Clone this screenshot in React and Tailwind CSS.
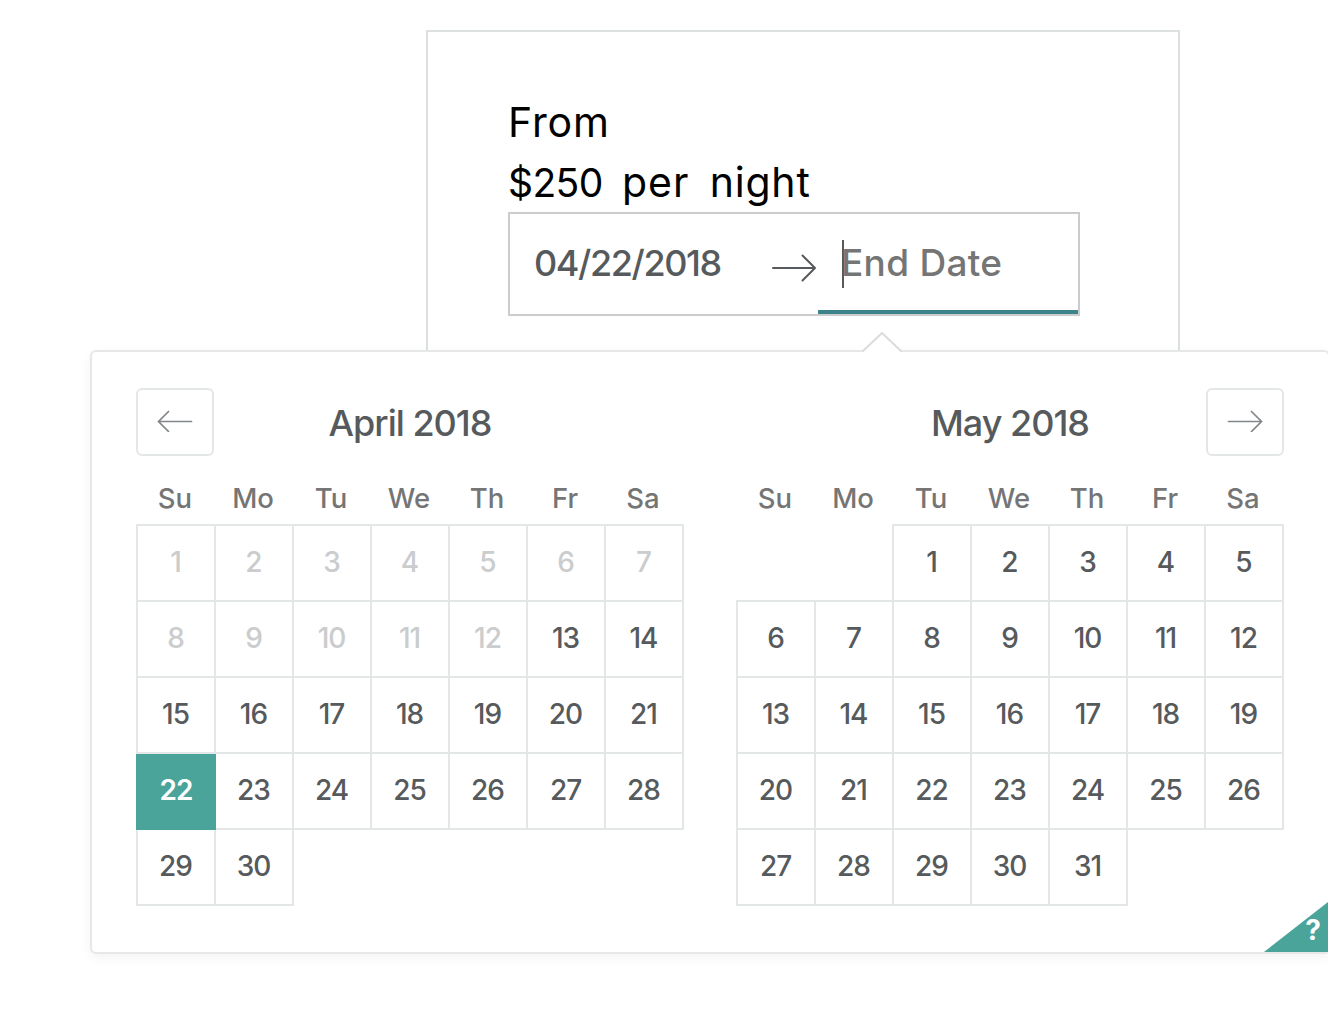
import React from 'react';

const WEEKDAYS = ['Su', 'Mo', 'Tu', 'We', 'Th', 'Fr', 'Sa'];

function LongArrow({ className }) {
  return (
    <svg viewBox="0 0 44 28" className={className} fill="none" stroke="currentColor" strokeLinecap="round" strokeLinejoin="round">
      <path d="M1 14h42M30.500 1.500L43 14 30.500 26.500" />
    </svg>
  );
}

function NavArrow({ left = false }) {
  return (
    <svg viewBox="0 0 36 22" className="h-[22px] w-9 text-[#82888a]" fill="none" stroke="currentColor" strokeWidth="1.7" strokeLinecap="round">
      {left ? <path d="M34.500 11.500H1.500M11.500 1.500L1.500 11.500l10 10" /> : <path d="M1.500 11.500H34.500M24.500 1.500L34.500 11.500 24.500 21.500" />}
    </svg>
  );
}

function NavButton({ left = false }) {
  return (
    <button className="flex h-[68px] w-[78px] items-center justify-center rounded-[6px] border-2 border-[#e4e7e7] pb-0.5">
      <NavArrow left={left} />
    </button>
  );
}

function Day({ n, disabled, selected }) {
  if (selected) {
    return (
      <div className="z-10 mt-0.5 flex h-[76px] w-20 items-center justify-center bg-[#4ba499] pb-1 text-white font-semibold">
        {n}
      </div>
    );
  }
  return (
    <div className={'flex h-[78px] w-20 items-center justify-center border-2 border-[#e4e7e7] pr-px pb-0.5 ' + (disabled ? 'text-[#cacccd]' : 'text-[#565a5c]')}>
      {n}
    </div>
  );
}

function Month({ offset, count, disabledUntil = 0, selected }) {
  const blanks = Array.from({ length: offset });
  const days = Array.from({ length: count }, (_, i) => i + 1);
  return (
    <div className="w-[548px] text-[28px]">
      <div className="grid h-[52px] grid-cols-[repeat(7,78px)] items-center pt-0.5 text-center text-[#757575]">
        {WEEKDAYS.map((d) => (
          <span key={d} className="text-[27.500px] font-[450]">{d}</span>
        ))}
      </div>
      <div className="grid auto-rows-[76px] grid-cols-[repeat(7,78px)] font-medium tracking-[-1px]">
        {blanks.map((_, i) => (
          <span key={'b' + i} />
        ))}
        {days.map((n) => (
          <Day key={n} n={n} disabled={n <= disabledUntil} selected={n === selected} />
        ))}
      </div>
    </div>
  );
}

export default function App() {
  return (
    <div className="h-[1034px] w-[1328px] overflow-hidden bg-white pt-[30px] font-['Inter',sans-serif]">
      <div className="ml-[426px] h-80 w-[754px] border-2 border-b-0 border-[#dce0e0] px-20 pt-[60px]">
        <div className="h-[60px] text-[41px] leading-[60px] tracking-[0.900px] text-black">From</div>
        <div className="h-[60px] whitespace-nowrap text-[41px] leading-[60px] text-black [word-spacing:8px]">
          <span className="text-[39px] tracking-[-0.600px]">$250 </span>
          <span className="ml-px tracking-[0.900px]">per </span>
          <span className="tracking-[0.800px]">night</span>
        </div>
        <div className="flex h-[104px] w-[572px] border-2 border-[#cacccd] text-[36px]">
          <div className="flex w-[260px] items-center pl-6 pb-[3px] font-[450] text-[#565a5c] tracking-[-1.400px]">
            <span>04/22/2018</span>
          </div>
          <div className="flex w-12 items-center pt-2 pl-0.5">
            <LongArrow className="h-7 w-11 stroke-2 text-[#565a5c]" />
          </div>
          <div className="flex w-[260px] items-center border-b-4 border-[#3c8489] pt-[3px] pl-6 text-[#757575]">
            <span className="h-12 w-0.5 bg-[#565a5c]" />
            <span className="-ml-[3px] pb-0.5 text-[37px] font-[450] tracking-[0.300px]">End Date</span>
          </div>
        </div>
      </div>

      <div className="relative ml-[90px] h-[604px] w-[1240px] rounded-[6px] border-2 border-[#e6e7e7] bg-white px-11 pt-9 shadow-[0_4px_12px_rgba(0,0,0,0.05)]">
        <svg viewBox="0 0 40 20" className="absolute -top-5 left-[770px] h-5 w-10" fill="white" stroke="#dbdcdc" strokeWidth="2">
          <path d="M0 20L20 1l20 19" />
        </svg>
        <div className="flex h-[84px] items-start justify-between">
          <NavButton left />
          <div className="flex h-[68px] flex-1 items-center justify-between pt-0.5 text-center text-[36px] font-medium tracking-[-1px] text-[#565a5c]">
            <span className="w-[392px]">April 2018</span>
            <span className="w-[392px]">May 2018</span>
          </div>
          <NavButton />
        </div>
        <div className="flex justify-between">
          <Month offset={0} count={30} disabledUntil={12} selected={22} />
          <Month offset={2} count={31} />
        </div>
        <div className="absolute right-0 bottom-0 flex h-[50px] w-16 items-end justify-end bg-[#4ba499] pr-[7px] pb-[5px] text-[28px] leading-[34px] font-bold text-white [clip-path:polygon(100%_0,100%_100%,0_100%)]">
          ?
        </div>
      </div>
    </div>
  );
}
